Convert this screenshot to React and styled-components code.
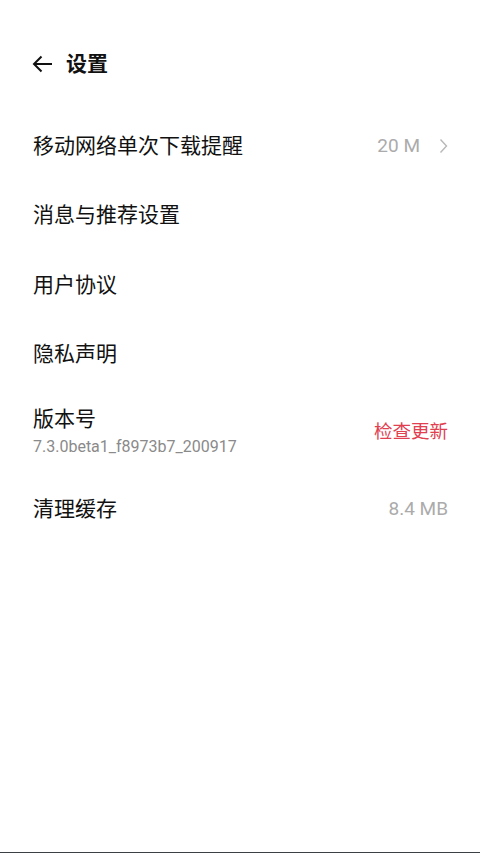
import React from 'react';
import styled, { createGlobalStyle } from 'styled-components';

const GlobalStyle = createGlobalStyle`
  html, body {
    margin: 0;
    padding: 0;
    background: #fff;
  }
  body {
    font-family: Roboto, "Noto Sans CJK SC", "Noto Sans", sans-serif;
  }
`;

const Page = styled.div`
  width: 480px;
  height: 853px;
  box-sizing: border-box;
  background: #fff;
  border-bottom: 1px solid #3c3f44;
  display: flex;
  flex-direction: column;
`;

const Header = styled.div`
  height: 111px;
  box-sizing: border-box;
  padding: 44px 32px 27px;
  display: flex;
  align-items: center;
  gap: 13px;
`;

const BackButton = styled.button`
  border: 0;
  padding: 0;
  background: none;
  width: 21px;
  height: 40px;
  display: flex;
  align-items: center;
  cursor: pointer;
`;

const Title = styled.h1`
  margin: 0;
  font-size: 21px;
  font-weight: 700;
  line-height: 40px;
  color: #111;
`;

const Row = styled.div`
  height: ${p => p.h || 69.5}px;
  box-sizing: border-box;
  padding: 0 32px 0 33px;
  display: flex;
  align-items: center;
  justify-content: space-between;
`;

const Label = styled.div`
  display: flex;
  flex-direction: column;
`;

const Name = styled.span`
  font-size: 21px;
  line-height: 28px;
  color: #111;
`;

const Sub = styled.span`
  margin-top: 3px;
  font-size: 16px;
  line-height: 22px;
  color: #8a8a8a;
`;

const Value = styled.span`
  display: flex;
  align-items: center;
  gap: 19px;
  font-size: 19px;
  color: #ababab;
`;

const Action = styled.span`
  margin-bottom: 4px;
  font-size: 18.5px;
  color: #e0404f;
`;

const Chevron = () => (
  <svg width="9" height="16" viewBox="0 0 9 16">
    <path d="M1.5 1.5 L7.5 8 L1.5 14.5" fill="none" stroke="#b8b8b8" strokeWidth="1.4" />
  </svg>
);

const ArrowLeft = () => (
  <svg width="21" height="18" viewBox="0 0 21 18">
    <path d="M20 9 H2 M9.5 1.5 L2 9 L9.5 16.5" fill="none" stroke="#111" strokeWidth="2" />
  </svg>
);

export default function App() {
  return (
    <Page>
      <GlobalStyle />
      <Header>
        <BackButton>
          <ArrowLeft />
        </BackButton>
        <Title>设置</Title>
      </Header>
      <Row>
        <Name>移动网络单次下载提醒</Name>
        <Value>
          20 M
          <Chevron />
        </Value>
      </Row>
      <Row>
        <Name>消息与推荐设置</Name>
      </Row>
      <Row>
        <Name>用户协议</Name>
      </Row>
      <Row>
        <Name>隐私声明</Name>
      </Row>
      <Row h={85}>
        <Label>
          <Name>版本号</Name>
          <Sub>7.3.0beta1_f8973b7_200917</Sub>
        </Label>
        <Action>检查更新</Action>
      </Row>
      <Row>
        <Name>清理缓存</Name>
        <Value>8.4 MB</Value>
      </Row>
    </Page>
  );
}
